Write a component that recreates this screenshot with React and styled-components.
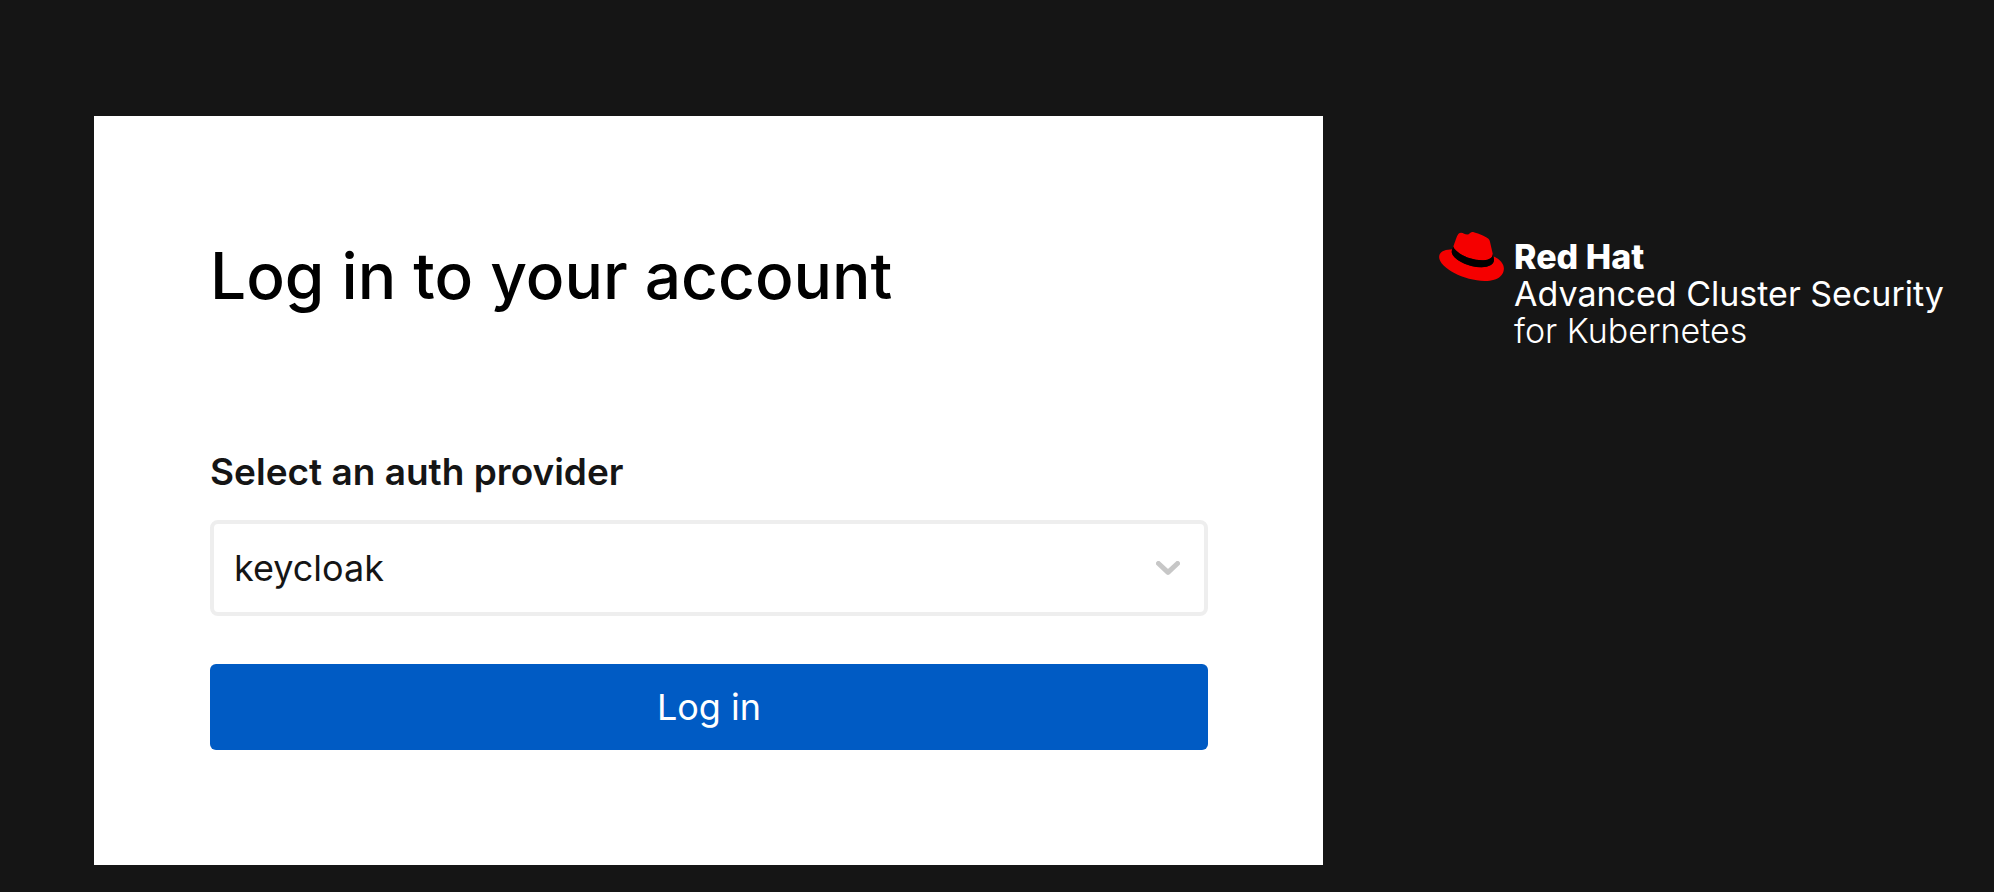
import React, { useState } from "react";
import styled, { createGlobalStyle } from "styled-components";

const GlobalStyle = createGlobalStyle`
  *, *::before, *::after {
    box-sizing: border-box;
  }
  body {
    margin: 0;
    background: #151515;
    color: #151515;
    font-family: Inter, "Liberation Sans", sans-serif;
  }
`;

const Page = styled.div`
  min-height: 100vh;
  padding: 116px 0 24px 94px;
  display: grid;
  grid-template-columns: minmax(0, 1229fr) minmax(0, 555fr);
  column-gap: 116px;
  align-items: start;

  @media (max-width: 1400px) {
    padding: 48px 24px;
    grid-template-columns: minmax(0, 1fr);
    row-gap: 48px;
  }
`;

const Card = styled.main`
  padding: 116px 115px 115px 116px;
  background: #ffffff;

  @media (max-width: 1400px) {
    padding: 48px;
  }
`;

const Title = styled.h1`
  margin: 0 0 124px;
  color: #000000;
  font-size: 64px;
  font-weight: 500;
  line-height: 88px;
`;

const Form = styled.form`
  display: flex;
  flex-direction: column;
  gap: 48px;
`;

const Field = styled.div`
  display: flex;
  flex-direction: column;
  gap: 20px;
`;

const Label = styled.label`
  font-size: 37px;
  font-weight: 600;
  line-height: 56px;
`;

const SelectFrame = styled.div`
  display: grid;
  align-items: center;

  & > * {
    grid-area: 1 / 1;
  }
`;

const Select = styled.select`
  width: 100%;
  height: 96px;
  margin: 0;
  padding: 0 72px 0 20px;
  appearance: none;
  border: 4px solid #eeeeee;
  border-radius: 8px;
  background: #ffffff;
  color: #151515;
  font-family: inherit;
  font-size: 36px;
  cursor: pointer;
`;

const Chevron = styled.svg`
  justify-self: end;
  width: 24px;
  height: 14px;
  margin-right: 28px;
  pointer-events: none;
`;

const SubmitButton = styled.button`
  width: 100%;
  height: 86px;
  padding: 0 24px;
  border: 0;
  border-radius: 6px;
  background: #005bc4;
  color: #ffffff;
  font-family: inherit;
  font-size: 36px;
  cursor: pointer;
`;

const Brand = styled.aside`
  display: flex;
  align-items: flex-start;
  gap: 10px;
  padding-top: 116px;
  color: #ffffff;

  @media (max-width: 1400px) {
    padding-top: 0;
  }
`;

const HatLogo = styled.svg`
  flex: none;
  width: 65px;
  height: 49px;
`;

const BrandText = styled.div`
  padding-top: 6px;
`;

const BrandLine = styled.div`
  font-size: 34px;
  font-weight: ${({ $weight }) => $weight};
  line-height: 37px;
`;

export default function App() {
  const [provider, setProvider] = useState("keycloak");

  return (
    <>
      <GlobalStyle />
      <Page>
        <Card>
          <Title>Log in to your account</Title>
          <Form onSubmit={(event) => event.preventDefault()}>
            <Field>
              <Label htmlFor="provider">Select an auth provider</Label>
              <SelectFrame>
                <Select
                  id="provider"
                  value={provider}
                  onChange={(event) => setProvider(event.target.value)}
                >
                  <option value="keycloak">keycloak</option>
                </Select>
                <Chevron viewBox="0 0 24 14" aria-hidden="true">
                  <path
                    d="M2.5 2.5 12 11.3 21.5 2.5"
                    fill="none"
                    stroke="#c7c7c7"
                    strokeWidth="5"
                    strokeLinecap="round"
                    strokeLinejoin="round"
                  />
                </Chevron>
              </SelectFrame>
            </Field>
            <SubmitButton type="submit">Log in</SubmitButton>
          </Form>
        </Card>
        <Brand>
          <HatLogo viewBox="0 2.92 24 18.16" aria-hidden="true">
            <path
              fill="#f50000"
              d="M16.009 13.386c1.577 0 3.86-.326 3.86-2.202a1.765 1.765 0 0 0-.04-.431l-.94-4.08c-.216-.898-.406-1.305-1.982-2.093-1.223-.625-3.888-1.658-4.676-1.658-.733 0-.947.946-1.822.946-.842 0-1.467-.706-2.255-.706-.757 0-1.25.515-1.63 1.576 0 0-1.06 2.99-1.197 3.424a.81.81 0 0 0-.028.245c0 1.162 4.577 4.974 10.71 4.974m4.101-1.435c.218 1.032.218 1.14.218 1.277 0 1.765-1.984 2.745-4.593 2.745-5.895.004-11.06-3.451-11.06-5.734a2.326 2.326 0 0 1 .19-.925C2.746 9.415 0 9.794 0 12.217c0 3.969 9.405 8.861 16.851 8.861 5.71 0 7.149-2.582 7.149-4.62 0-1.605-1.387-3.425-3.887-4.512"
            />
            <path
              fill="#000000"
              d="M20.11 11.95c.218 1.032.218 1.14.218 1.277 0 1.765-1.984 2.745-4.593 2.745C9.84 15.977 4.675 12.522 4.675 10.239a2.33 2.33 0 0 1 .19-.925l.462-1.147a.81.81 0 0 0-.028.245c0 1.162 4.577 4.974 10.71 4.974 1.577 0 3.86-.326 3.86-2.202a1.8 1.8 0 0 0-.04-.431z"
            />
          </HatLogo>
          <BrandText>
            <BrandLine $weight={800}>Red Hat</BrandLine>
            <BrandLine $weight={400}>Advanced Cluster Security</BrandLine>
            <BrandLine $weight={300}>for Kubernetes</BrandLine>
          </BrandText>
        </Brand>
      </Page>
    </>
  );
}
